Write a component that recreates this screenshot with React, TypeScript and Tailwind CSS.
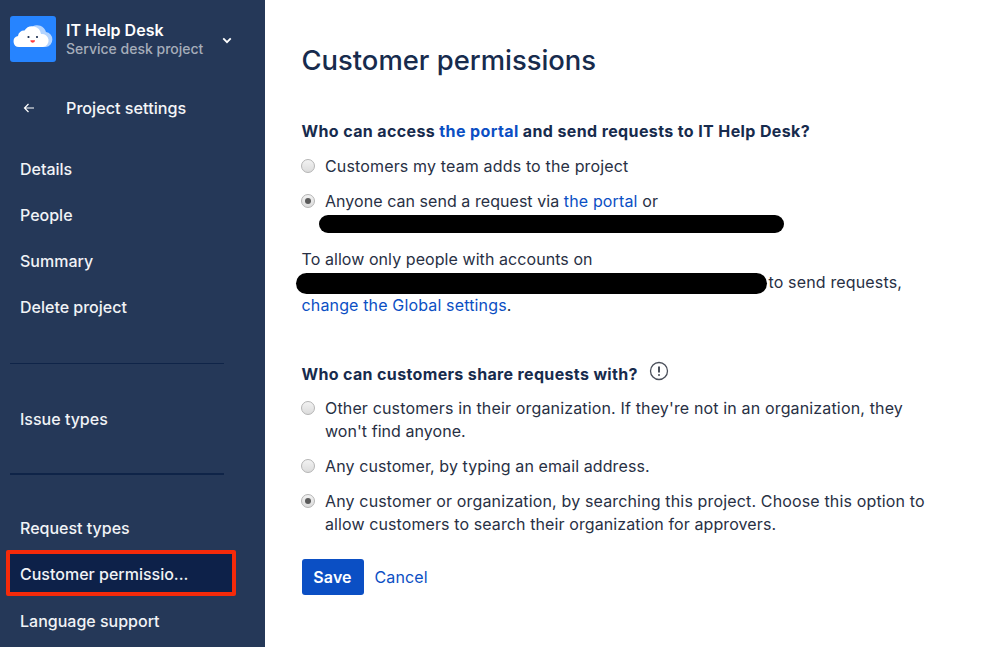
const navGroupOne = ["Details", "People", "Summary", "Delete project"];

function Radio({ checked }: { checked?: boolean }) {
  return (
    <span className="-ml-px mt-[4px] flex h-[14px] w-[14px] shrink-0 items-center justify-center rounded-full border border-[#b4b4b4] bg-gradient-to-b from-[#f2f2f2] to-[#dcdcdc]">
      {checked && <span className="h-[6px] w-[6px] rounded-full bg-[#5a5a5a]" />}
    </span>
  );
}

function Option({ checked, children, className }: { checked?: boolean; children: React.ReactNode; className?: string }) {
  return (
    <div className={`flex gap-[10.5px] leading-[23px] ${className ?? ""}`}>
      <Radio checked={checked} />
      <div>{children}</div>
    </div>
  );
}

function NavItem({ label, className }: { label: string; className?: string }) {
  return <div className={`flex h-[46px] items-center pl-[20px] text-[16px] font-medium text-[#f1f3f6] ${className ?? ""}`}>{label}</div>;
}

function CloudLogo() {
  return (
    <svg viewBox="0 0 46 46" className="h-[46px] w-[46px] shrink-0 rounded-[3px]">
      <rect width="46" height="46" fill="#2684ff" />
      <path d="M22 11a9 9 0 0 1 14 5a7.600 7.600 0 0 1 0 15H28z" fill="#b3d4ff" />
      <path d="M9 31a5.500 5.500 0 0 1-1-10.900a6 6 0 0 1 6.500-5.600a9 9 0 0 1 16.500 3.500a6.500 6.500 0 0 1 2 13z" fill="#ffffff" />
      <circle cx="18.500" cy="21" r="1.100" fill="#172b4d" />
      <circle cx="27" cy="21" r="1.100" fill="#172b4d" />
      <path d="M20.300 24.300h4.800a2.400 2.400 0 0 1-4.800 0z" fill="#ff3d3d" />
    </svg>
  );
}

export default function App() {
  return (
    <div className="flex h-[647px] w-[999px] overflow-hidden bg-white font-['Inter','Liberation_Sans',sans-serif] text-[16px] tracking-[0.15px] text-[#283044]">
      <aside className="h-full w-[264.5px] shrink-0 bg-[#253858] tracking-normal">
        <div className="flex items-center pl-[10px] pt-[16px]">
          <CloudLogo />
          <div className="ml-[10px] w-[153px]">
            <div className="text-[16px] font-semibold leading-[20px] text-white">IT Help Desk</div>
            <div className="text-[14px] font-medium leading-[18px] text-[#a5adba]">Service desk project</div>
          </div>
          <svg viewBox="0 0 12 8" className="ml-[3px] mt-[2px] h-[7px] w-[10px]" fill="none" stroke="white" strokeWidth="2.200">
            <path d="M1.500 1.500 6 6l4.500-4.500" />
          </svg>
        </div>
        <div className="mt-[23px] flex h-[46px] items-center">
          <svg viewBox="0 0 12 12" className="ml-[23px] h-[12px] w-[12px]" fill="none" stroke="white" strokeWidth="1.200">
            <path d="M11 6H1.500M5.500 2 1.500 6l4 4" />
          </svg>
          <span className="ml-[31px] text-[16.2px] font-medium text-[#f4f5f7]">Project settings</span>
        </div>
        <div className="mt-[15px]">
          {navGroupOne.map((item) => (
            <NavItem key={item} label={item} />
          ))}
        </div>
        <div className="ml-[10px] mt-[33px] h-px w-[214px] bg-[#0f2448]" />
        <NavItem label="Issue types" className="mt-[32px]" />
        <div className="ml-[10px] mt-[31px] h-[2px] w-[214px] bg-[#0f2448]" />
        <NavItem label="Request types" className="mt-[30px]" />
        <div className="-mt-px ml-[6px] flex h-[46px] w-[230px] items-center rounded-[2px] border-[4px] border-[#f52a0a] bg-[#0d2149] pl-[10px] pt-px text-[16px] font-medium text-[#f1f3f6]">
          Customer permissio...
        </div>
        <NavItem label="Language support" className="mt-[2px]" />
      </aside>

      <main className="flex-1 pl-[37px] pt-[42px]">
        <h1 className="text-[27.4px] font-medium leading-[36px] tracking-normal text-[#172b4d]">Customer permissions</h1>

        <p className="mt-[42px] font-bold leading-[23px] tracking-[0.38px] text-[#172b4d]">
          Who can access <a className="text-[#0b4fc4]">the portal</a> and send requests to IT Help Desk?
        </p>
        <Option className="mt-[12px]">Customers my team adds to the project</Option>
        <Option checked className="mt-[12px]">
          <span className="tracking-[0.05px]">Anyone can send a request via </span>
          <a className="text-[#0b4fc4]">the portal</a> or
          <span className="mt-[2px] block h-[18px] w-[465px] -translate-x-[6px] rounded-full bg-black" />
        </Option>
        <p className="mt-[15px] leading-[23px] tracking-[0.07px]">To allow only people with accounts on</p>
        <p className="leading-[23px]">
          <span className="-ml-[6px] mr-[2px] inline-block h-[21px] w-[471px] rounded-full bg-black align-middle" />
          to send requests,
          <br />
          <a className="text-[#0b4fc4]">change the Global settings</a>.
        </p>

        <div className="mt-[46px] flex items-center gap-[11px] font-bold leading-[23px] tracking-[0.35px] text-[#172b4d]">
          Who can customers share requests with?
          <svg viewBox="0 0 20 20" className="-mt-[8px] h-[20px] w-[20px]" fill="none" stroke="#4a4f5a" strokeWidth="1.300">
            <circle cx="10" cy="10" r="8.500" />
            <path d="M10 5.500v6M10 13.300v1.500" strokeWidth="2" />
          </svg>
        </div>
        <Option className="mt-[11px]">
          Other customers in their organization. If they're not in an organization, they
          <br />
          <span className="tracking-[0.05px]">won't find anyone.</span>
        </Option>
        <Option className="mt-[12px]">
          <span className="tracking-[0.1px]">Any customer, by typing an email address.</span>
        </Option>
        <Option checked className="mt-[12px]">
          Any customer or organization, by searching this project. Choose this option to
          <br />
          <span className="tracking-[0.1px]">allow customers to search their organization for approvers.</span>
        </Option>

        <div className="mt-[23px] flex items-center gap-[11px]">
          <button className="h-[36px] w-[62px] rounded-[3px] bg-[#0b4fc4] font-semibold text-white">Save</button>
          <a className="text-[#0b4fc4]">Cancel</a>
        </div>
      </main>
    </div>
  );
}
